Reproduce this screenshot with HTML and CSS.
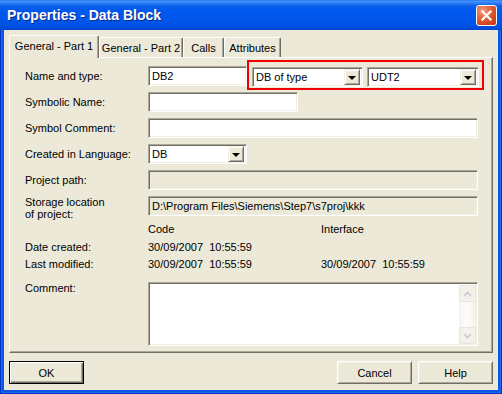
FILE: index.html
```html
<!DOCTYPE html>
<html>
<head>
<meta charset="utf-8">
<title>Properties - Data Block</title>
<link rel="stylesheet" href="styles.css">
</head>
<body>
<div class="window">
  <div class="titlebar">
    <span class="title">Properties - Data Block</span>
    <span class="close">
      <svg width="19" height="19" viewBox="0 0 19 19"><path d="M5.5 5.5 L13.5 13.5 M13.5 5.5 L5.5 13.5" stroke="#fff" stroke-width="2.2" stroke-linecap="square"/></svg>
    </span>
  </div>
  <div class="client">
    <div class="tabs">
      <div class="tab active t1">General - Part 1</div>
      <div class="tab t2">General - Part 2</div>
      <div class="tab t3">Calls</div>
      <div class="tab t4">Attributes</div>
    </div>
    <div class="panel">
      <div class="row r1">
        <div class="label">Name and type:</div>
        <div class="edit w99"><span class="val">DB2</span></div>
        <div class="redbox">
          <div class="combo w111"><span class="val">DB of type</span><span class="drop"><i class="arrow"></i></span></div>
          <div class="combo w112"><span class="val">UDT2</span><span class="drop"><i class="arrow"></i></span></div>
        </div>
      </div>
      <div class="row">
        <div class="label">Symbolic Name:</div>
        <div class="edit w150"></div>
      </div>
      <div class="row">
        <div class="label">Symbol Comment:</div>
        <div class="edit w330"></div>
      </div>
      <div class="row">
        <div class="label">Created in Language:</div>
        <div class="combo w99"><span class="val">DB</span><span class="drop"><i class="arrow"></i></span></div>
      </div>
      <div class="row">
        <div class="label">Project path:</div>
        <div class="edit disabled w330"></div>
      </div>
      <div class="row">
        <div class="label two">Storage location<br>of project:</div>
        <div class="edit disabled w330"><span class="val">D:\Program Files\Siemens\Step7\s7proj\kkk</span></div>
      </div>
      <div class="trow r7">
        <div class="label"></div>
        <div class="c1">Code</div>
        <div class="c2">Interface</div>
      </div>
      <div class="trow r8">
        <div class="label">Date created:</div>
        <div class="c1">30/09/2007&nbsp;&nbsp;10:55:59</div>
        <div class="c2"></div>
      </div>
      <div class="trow r9">
        <div class="label">Last modified:</div>
        <div class="c1">30/09/2007&nbsp;&nbsp;10:55:59</div>
        <div class="c2">30/09/2007&nbsp;&nbsp;10:55:59</div>
      </div>
      <div class="trow r10">
        <div class="label">Comment:</div>
        <div class="memo">
          <div class="vscroll">
            <span class="sbtn"><svg width="9" height="6" viewBox="0 0 9 6"><path d="M1 5 L4.5 1.5 L8 5" fill="none" stroke="#C6CBD6" stroke-width="1.6"/></svg></span>
            <span class="strack"></span>
            <span class="sbtn"><svg width="9" height="6" viewBox="0 0 9 6"><path d="M1 1 L4.5 4.5 L8 1" fill="none" stroke="#C6CBD6" stroke-width="1.6"/></svg></span>
          </div>
        </div>
      </div>
    </div>
    <div class="buttons">
      <div class="btn default">OK</div>
      <div class="spacer"></div>
      <div class="btn">Cancel</div>
      <div class="btn">Help</div>
    </div>
  </div>
</div>
</body>
</html>
```
FILE: styles.css
```css
* { box-sizing: border-box; }
html, body { margin: 0; padding: 0; }
body {
  width: 502px;
  height: 394px;
  overflow: hidden;
  font-family: "Liberation Sans", Arial, sans-serif;
  font-size: 11px;
  color: #000;
  background: #0054E3;
}
.window {
  width: 502px;
  height: 394px;
  display: flex;
  flex-direction: column;
  background: #0858E4;
  box-shadow: inset 1px 0 #0030C8, inset -1px 0 #0030C8, inset 0 -1px #0030C8, inset 2px 0 #1E6EF2, inset -2px 0 #1E6EF2, inset 0 -2px #1A68EE;
}
.titlebar {
  height: 30px;
  flex: none;
  display: flex;
  align-items: center;
  justify-content: space-between;
  padding: 0 5px 1px 7px;
  background: linear-gradient(#1A6AF0 0, #4A97FA 1px, #2F7EF4 3px, #0C61EA 6px, #0058EE 10px, #0056EA 20px, #0052E4 25px, #004AD8 28px, #0043CC 30px);
}
.title {
  color: #fff;
  font-weight: bold;
  font-size: 14px;
  font-family: "Liberation Sans", Arial, sans-serif;
  text-shadow: 1px 1px #0A2A8A;
}
.close {
  width: 21px;
  height: 21px;
  border: 1px solid #fff;
  border-radius: 3px;
  display: flex;
  align-items: center;
  justify-content: center;
  background: radial-gradient(circle at 30% 25%, #F0A084 0, #E6683F 35%, #D4481F 70%, #C23A15 100%);
  margin-top: 1px;
}
.close svg { display: block; }
.client {
  flex: 1;
  margin: 0 4px 4px 4px;
  background: #ECE9D8;
  padding: 5px 5px 0 5px;
  display: flex;
  flex-direction: column;
}
.tabs {
  display: flex;
  align-items: flex-end;
  height: 22px;
  flex: none;
  position: relative;
  z-index: 1;
}
.tab {
  height: 20px;
  border-top: 1px solid #fff;
  border-left: 1px solid #fff;
  border-right: 1px solid #716F64;
  box-shadow: inset -1px 0 #ACA899;
  border-radius: 2px 2px 0 0;
  background: #ECE9D8;
  display: flex;
  align-items: center;
  justify-content: center;
  padding-top: 1px;
  white-space: nowrap;
}
.tab.active {
  height: 23px;
  margin-bottom: -1px;
  padding-bottom: 3px;
}
.t1 { width: 90px; }
.t2 { width: 84px; }
.t3 { width: 41px; }
.t4 { width: 57px; }
.panel {
  height: 296px;
  flex: none;
  border-top: 1px solid #fff;
  border-left: 1px solid #fff;
  border-right: 1px solid #716F64;
  border-bottom: 1px solid #716F64;
  box-shadow: inset -1px -1px #ACA899;
  padding: 8px 15px 0 15px;
}
.row {
  display: flex;
  align-items: center;
  height: 20px;
  margin-top: 6px;
}
.row.r1 { margin-top: 0; }
.label {
  width: 123px;
  flex: none;
  line-height: 13px;
  white-space: nowrap;
}
.label.two {
  align-self: flex-start;
  line-height: 12px;
  margin-top: 0;
}
.edit, .combo {
  height: 20px;
  background: #fff;
  border: 1px solid;
  border-color: #ACA899 #fff #fff #ACA899;
  box-shadow: inset 1px 1px #716F64, inset -1px -1px #F1EFE2;
  display: flex;
  align-items: center;
  flex: none;
}
.edit.disabled { background: #ECE9D8; }
.val {
  padding-left: 3px;
  line-height: 13px;
  white-space: nowrap;
}
.combo { padding: 2px 2px 2px 1px; }
.combo .val { flex: 1; padding-left: 2px; }
.drop {
  width: 16px;
  height: 16px;
  flex: none;
  background: #ECE9D8;
  border: 1px solid;
  border-color: #F1EFE2 #716F64 #716F64 #F1EFE2;
  box-shadow: inset 1px 1px #fff, inset -1px -1px #ACA899;
  display: flex;
  align-items: center;
  justify-content: center;
}
.arrow {
  width: 0;
  height: 0;
  border-left: 4px solid transparent;
  border-right: 4px solid transparent;
  border-top: 4px solid #000;
  margin-top: 1px;
}
.w99 { width: 99px; }
.w111 { width: 111px; }
.w112 { width: 112px; }
.w150 { width: 150px; }
.w330 { width: 330px; }
.redbox {
  display: flex;
  gap: 4px;
  border: 2px solid #F00000;
  margin: -6px 0 -4px 0;
  padding: 5px 3px 1px 3px;
  height: 30px;
}
.trow {
  display: flex;
  line-height: 13px;
  height: 13px;
}
.r7 { margin-top: 7px; }
.r8 { margin-top: 5px; }
.r9 { margin-top: 4px; }
.r10 { margin-top: 11px; align-items: flex-start; }
.c1 { width: 173px; flex: none; white-space: nowrap; }
.c2 { white-space: nowrap; }
.r10 .label { margin-top: 0; }
.memo {
  width: 330px;
  height: 64px;
  flex: none;
  background: #fff;
  border: 1px solid;
  border-color: #ACA899 #fff #fff #ACA899;
  box-shadow: inset 1px 1px #716F64, inset -1px -1px #F1EFE2;
  display: flex;
  justify-content: flex-end;
  padding: 2px 1px 1px 2px;
}
.vscroll {
  width: 17px;
  height: 100%;
  display: flex;
  flex-direction: column;
  background: linear-gradient(to right, #F4F3EE 0, #FDFCFA 40%, #FAF8F2 70%, #F1EFE6 100%);
}
.sbtn {
  width: 17px;
  height: 17px;
  flex: none;
  border: 1px solid #E8E6DC;
  border-radius: 2px;
  background: #F3F1EA;
  display: flex;
  align-items: center;
  justify-content: center;
}
.strack { flex: 1; }
.buttons {
  display: flex;
  margin-top: 8px;
  height: 23px;
  flex: none;
  gap: 6px;
}
.spacer { flex: 1; }
.btn {
  width: 75px;
  height: 23px;
  background: #ECE9D8;
  border: 1px solid;
  border-color: #fff #716F64 #716F64 #fff;
  box-shadow: inset 1px 1px #F1EFE2, inset -1px -1px #ACA899;
  display: flex;
  align-items: center;
  justify-content: center;
  padding-top: 1px;
}
.btn.default {
  border: 1px solid #000;
  box-shadow: inset 1px 1px #fff, inset -1px -1px #716F64, inset -2px -2px #ACA899;
}
```
